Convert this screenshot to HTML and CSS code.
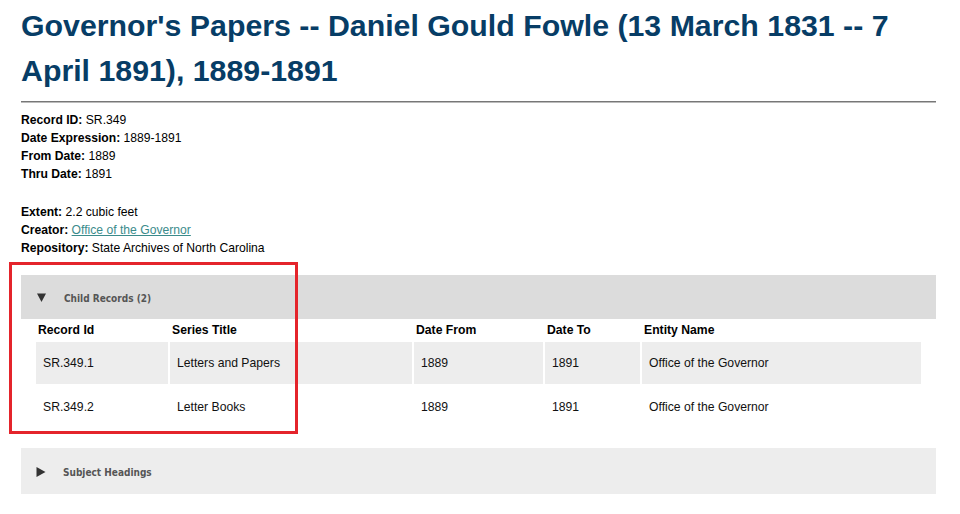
FILE: index.html
```html
<!DOCTYPE html>
<html lang="en">
<head>
<meta charset="utf-8">
<title>Governor's Papers -- Daniel Gould Fowle</title>
<link rel="stylesheet" href="styles.css">
</head>
<body>
<div class="page">
  <h1 class="title">Governor's Papers -- Daniel Gould Fowle (13 March 1831 -- 7 April 1891), 1889-1891</h1>
  <hr class="rule">
  <div class="meta">
    <div><b>Record ID:</b> SR.349</div>
    <div><b>Date Expression:</b> 1889-1891</div>
    <div><b>From Date:</b> 1889</div>
    <div><b>Thru Date:</b> 1891</div>
  </div>
  <div class="meta meta-second">
    <div><b>Extent:</b> 2.2 cubic feet</div>
    <div><b>Creator:</b> <a href="#" class="link">Office of the Governor</a></div>
    <div><b>Repository:</b> State Archives of North Carolina</div>
  </div>

  <section class="panel panel-open">
    <div class="panel-head">
      <svg class="tri" width="9" height="9" viewBox="0 0 9 9"><polygon points="0,0.5 9,0.5 4.5,9" fill="#333"/></svg>
      <span class="panel-label">Child Records (2)</span>
    </div>
    <table class="records">
      <thead>
        <tr>
          <th class="c1">Record Id</th>
          <th class="c2">Series Title</th>
          <th class="c3">Date From</th>
          <th class="c4">Date To</th>
          <th class="c5">Entity Name</th>
        </tr>
      </thead>
      <tbody>
        <tr class="odd">
          <td>SR.349.1</td>
          <td>Letters and Papers</td>
          <td>1889</td>
          <td>1891</td>
          <td>Office of the Governor</td>
        </tr>
        <tr>
          <td>SR.349.2</td>
          <td>Letter Books</td>
          <td>1889</td>
          <td>1891</td>
          <td>Office of the Governor</td>
        </tr>
      </tbody>
    </table>
  </section>

  <section class="panel panel-closed">
    <div class="panel-head panel-head-closed">
      <svg class="tri tri-right" width="10" height="10" viewBox="0 0 10 10"><polygon points="0.5,0 9.5,5 0.5,10" fill="#333"/></svg>
      <span class="panel-label">Subject Headings</span>
    </div>
  </section>
</div>
<div class="highlight"></div>
</body>
</html>
```

FILE: styles.css
```css
html, body {
  margin: 0;
  padding: 0;
  background: #ffffff;
}

body {
  font-family: "Liberation Sans", Arial, sans-serif;
  color: #000;
  position: relative;
}

.page {
  padding: 3px 24px 20px 21px;
}

.title {
  margin: 0;
  font-size: 30.3px;
  line-height: 45px;
  font-weight: bold;
  color: #073d66;
}

.rule {
  margin: 8px 0 0 0;
  border: 0;
  border-top: 1px solid #777;
  height: 1px;
  background: #bbb;
}

.meta {
  margin-top: 8px;
  font-size: 12.15px;
  line-height: 18px;
}

.meta-second {
  margin-top: 20px;
}

.link {
  color: #3b8b8b;
  text-decoration: underline;
}

.panel-open {
  margin-top: 18px;
}

.panel-head {
  display: flex;
  align-items: center;
  height: 44px;
  background: #dcdcdc;
  padding-left: 16px;
}

.panel-head-closed {
  height: 46px;
  background: #ededed;
  padding-left: 15px;
}

.tri {
  display: block;
  margin-right: 18px;
}

.tri-right {
  margin-right: 17px;
  margin-top: 2px;
}

.panel-label {
  font-family: "DejaVu Sans Condensed", "DejaVu Sans", sans-serif;
  font-size: 10px;
  font-weight: bold;
  color: #555;
  padding-top: 2px;
}

.panel-closed {
  margin-top: 18px;
}

.records {
  width: calc(100% - 26px);
  margin: 0 13px;
  border-spacing: 2px;
  font-size: 12.2px;
  table-layout: fixed;
}

.records th {
  text-align: left;
  font-weight: bold;
  padding: 2px 2px;
  line-height: 15px;
}

.records td {
  padding: 13px 7px;
  line-height: 16px;
  color: #111;
}

.records tr.odd td {
  background: #ededed;
}

.c1 { width: 128px; }
.c2 { width: 238px; }
.c3 { width: 125px; }
.c4 { width: 91px; }

.highlight {
  position: absolute;
  left: 9px;
  top: 262px;
  width: 283px;
  height: 166px;
  border: 3px solid #e4242b;
  pointer-events: none;
}
```
